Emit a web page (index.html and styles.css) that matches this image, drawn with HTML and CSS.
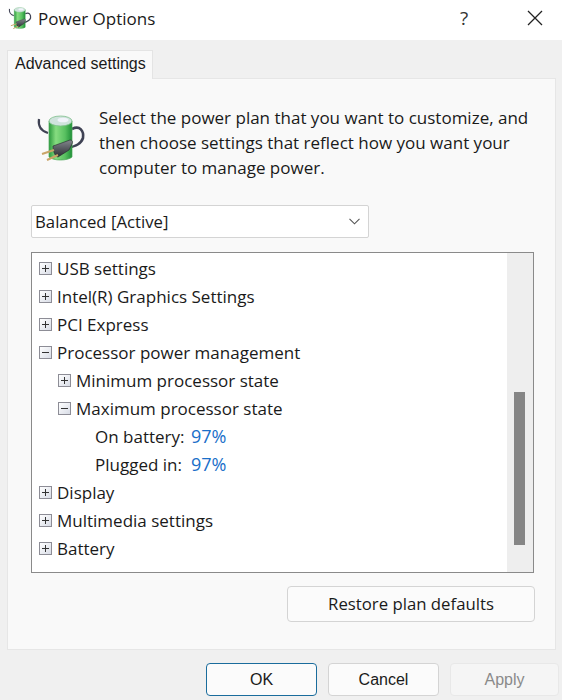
FILE: index.html
```html
<!DOCTYPE html>
<html lang="en">
<head>
  <meta charset="UTF-8" />
  <meta name="viewport" content="width=device-width, initial-scale=1" />
  <title>Power Options</title>
  <link rel="stylesheet" href="styles.css">
</head>
<body>
<svg class="defs" width="0" height="0">
  <defs>
    <linearGradient id="cell" x1="0" x2="1" y1="0" y2="0">
      <stop offset="0" stop-color="#2c9a3f" />
      <stop offset="0.3" stop-color="#86dc80" />
      <stop offset="0.7" stop-color="#58c060" />
      <stop offset="1" stop-color="#1f8f38" />
    </linearGradient>
    <linearGradient id="plug" x1="0" x2="0" y1="0" y2="1">
      <stop offset="0" stop-color="#83878d" />
      <stop offset="1" stop-color="#2b2e33" />
    </linearGradient>
    <g id="battery">
      <path d="M3 6 C2 13 5 18 12 20" fill="none" stroke="#3f4254" stroke-width="2.2" />
      <path d="M36 16 C44 12 48 18 47 25 C45 31 40 33 32 35" fill="none" stroke="#3f4254" stroke-width="2.6" />
      <path d="M13 8 L36 8 L36 44 C32 48 17 48 13 44 Z" fill="url(#cell)" stroke="#4aa858" stroke-width="0.7" />
      <ellipse cx="24.5" cy="8" rx="11.5" ry="5" fill="#cfe3dc" stroke="#7fbf8c" stroke-width="0.8" />
      <ellipse cx="27" cy="7" rx="5.5" ry="2.3" fill="#f1f3fa" />
      <path d="M17 33 L34 27 C36.5 27 37 29 36 31 L33 37 L22 44 C19 44 17 38 17 33 Z" fill="url(#plug)" stroke="#24262a" stroke-width="0.6" />
      <path d="M18 37 L6 41" stroke="#c9a468" stroke-width="2" />
      <path d="M22 42 L11 47" stroke="#c9a468" stroke-width="2" />
    </g>
  </defs>
</svg>

<div class="titlebar">
  <svg class="title-icon" width="24" height="25" viewBox="0 0 50 52"><use href="#battery" /></svg>
  <span class="title-text">Power Options</span>
  <span class="help">?</span>
  <svg class="close" width="16" height="16" viewBox="0 0 16 16"><path d="M1 1 L15 15 M15 1 L1 15" stroke="#222" stroke-width="1.3" fill="none" /></svg>
</div>

<div class="tabs">
  <div class="tab">Advanced settings</div>
</div>

<div class="panel">
  <div class="intro">
    <svg class="intro-icon" width="50" height="52" viewBox="0 0 50 52"><use href="#battery" /></svg>
    <p>Select the power plan that you want to customize, and then choose settings that reflect how you want your computer to manage power.</p>
  </div>

  <div class="select">
    <span>Balanced [Active]</span>
    <svg width="11" height="7" viewBox="0 0 11 7"><path d="M0.5 0.8 L5.5 5.8 L10.5 0.8" fill="none" stroke="#555" stroke-width="1.1" /></svg>
  </div>

  <div class="tree">
    <ul class="rows">
      <li class="row"><i class="box plus"></i>USB settings</li>
      <li class="row"><i class="box plus"></i>Intel(R) Graphics Settings</li>
      <li class="row"><i class="box plus"></i>PCI Express</li>
      <li class="row"><i class="box"></i>Processor power management</li>
      <li class="row lvl2"><i class="box plus"></i>Minimum processor state</li>
      <li class="row lvl2"><i class="box"></i>Maximum processor state</li>
      <li class="row lvl3"><span class="label">On battery:</span><a class="val">97%</a></li>
      <li class="row lvl3"><span class="label">Plugged in:</span><a class="val">97%</a></li>
      <li class="row"><i class="box plus"></i>Display</li>
      <li class="row"><i class="box plus"></i>Multimedia settings</li>
      <li class="row"><i class="box plus"></i>Battery</li>
    </ul>
    <div class="scrollbar"><div class="thumb"></div></div>
  </div>

  <div class="restore-row">
    <button class="btn restore">Restore plan defaults</button>
  </div>
</div>

<div class="footer">
  <button class="btn ok">OK</button>
  <button class="btn">Cancel</button>
  <button class="btn apply">Apply</button>
</div>
</body>
</html>
```

FILE: styles.css
```css
html, body {
  margin: 0;
  padding: 0;
}
body {
  width: 562px;
  height: 700px;
  overflow: hidden;
  background: #f0f0f0;
  color: #1a1a1a;
  font-family: "Open Sans", "Noto Sans", sans-serif;
  font-size: 16px;
}
.defs {
  display: block;
  height: 0;
}

.titlebar {
  height: 40px;
  box-sizing: border-box;
  padding: 0 0 4px 8px;
  background: #fff;
  display: flex;
  align-items: center;
}
.title-icon {
  margin-right: 6px;
  flex: none;
}
.title-text {
  font-size: 17px;
  flex: 1;
}
.help {
  font-size: 19px;
  color: #333;
  width: 22px;
  margin-right: 52px;
  text-align: center;
}
.close {
  margin-right: 19px;
}

.tabs {
  height: 38px;
  padding: 10px 0 0 7px;
  box-sizing: border-box;
  display: flex;
}
.tab {
  width: 146px;
  background: #f9f9f9;
  border: 1px solid #e4e4e4;
  border-bottom: none;
  box-sizing: border-box;
  font-family: "Liberation Sans", sans-serif;
  font-size: 16px;
  line-height: 26px;
  padding-left: 7px;
  position: relative;
  z-index: 1;
  height: 29px;
}

.panel {
  width: 549px;
  height: 572px;
  margin-left: 7px;
  box-sizing: border-box;
  background: #f9f9f9;
  border: 1px solid #e6e6e6;
  padding: 0 21px 0 23px;
}

.intro {
  display: flex;
  height: 126px;
  padding-top: 25px;
  box-sizing: border-box;
}
.intro-icon {
  margin: 9px 13px 0 5px;
  flex: none;
}
.intro p {
  margin: 1px 0 0;
  font-size: 17px;
  line-height: 25px;
  width: 440px;
}

.select {
  width: 338px;
  height: 33px;
  box-sizing: border-box;
  background: #fff;
  border: 1px solid #d4d4d4;
  border-radius: 2px;
  font-size: 16.75px;
  padding: 0 8px 1px 3px;
  display: flex;
  align-items: center;
  justify-content: space-between;
}

.tree {
  width: 503px;
  height: 321px;
  margin-top: 14px;
  box-sizing: border-box;
  background: #fff;
  border: 1px solid #8a8a8a;
  display: flex;
}
.rows {
  list-style: none;
  margin: 0;
  padding: 1px 0 0 7px;
  flex: 1;
}
.row {
  height: 28px;
  display: flex;
  align-items: center;
  font-size: 17px;
  white-space: nowrap;
}
.lvl2 {
  padding-left: 19px;
}
.lvl3 {
  padding-left: 56px;
}
.label {
  width: 96px;
}
.val {
  color: #1a6fc9;
  font-size: 18px;
}
.box {
  width: 13px;
  height: 13px;
  box-sizing: border-box;
  border: 1px solid #8d8d96;
  background: linear-gradient(135deg, #fff, #d8dce6);
  margin-right: 5px;
  position: relative;
  flex: none;
}
.box::before {
  content: "";
  position: absolute;
  left: 2px;
  top: 5px;
  width: 7px;
  height: 1px;
  background: #333;
}
.plus::after {
  content: "";
  position: absolute;
  left: 5px;
  top: 2px;
  width: 1px;
  height: 7px;
  background: #333;
}

.scrollbar {
  width: 26px;
  background: #eeeeee;
  padding-left: 7px;
  box-sizing: border-box;
}
.thumb {
  width: 11px;
  height: 153px;
  margin-top: 139px;
  background: #858585;
}

.restore-row {
  display: flex;
  justify-content: flex-end;
  margin-top: 13px;
  width: 504px;
}

.btn {
  width: 111px;
  height: 33px;
  padding: 0;
  box-sizing: border-box;
  background: #fbfbfb;
  border: 1px solid #d4d4d4;
  border-radius: 4px;
  font-family: "Liberation Sans", sans-serif;
  font-size: 16px;
  color: #1a1a1a;
}
.restore {
  width: 248px;
  height: 36px;
  padding-bottom: 2px;
  font-family: "Open Sans", "Noto Sans", sans-serif;
  font-size: 16.75px;
}

.footer {
  display: flex;
  gap: 11px;
  padding: 13px 0 0 206px;
}
.ok {
  border: 1.5px solid #1a6c9c;
}
.apply {
  width: 109px;
  background: #f5f5f5;
  border-color: #e8e8e8;
  color: #8a8a8a;
}
```
